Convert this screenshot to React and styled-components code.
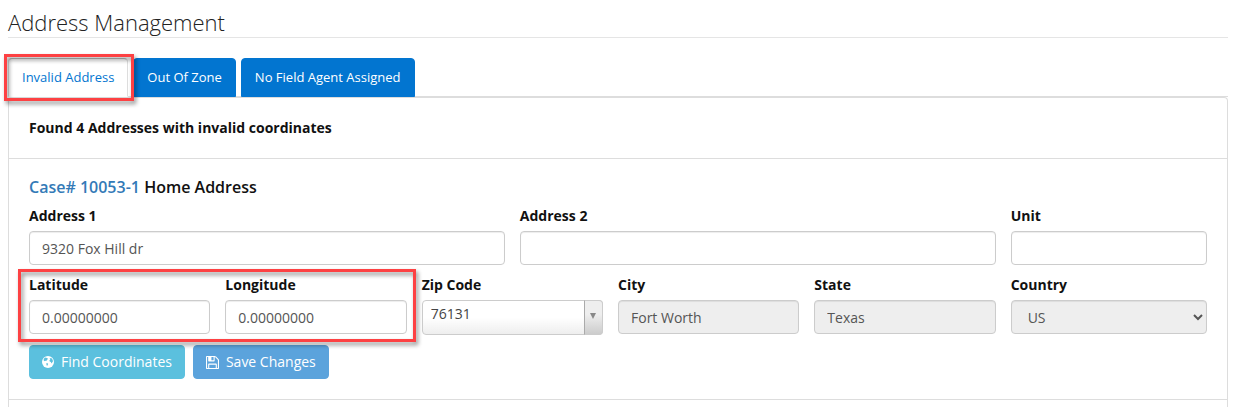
import React, { useState } from "react";
import styled, { createGlobalStyle, css } from "styled-components";

const GlobalStyle = createGlobalStyle`
  * {
    box-sizing: border-box;
  }
  body {
    margin: 0;
    background-color: #fff;
    color: #111;
    font-family: "Open Sans", "Noto Sans", sans-serif;
    font-size: 14px;
    line-height: 20px;
  }
`;

const Page = styled.main`
  display: flex;
  flex-direction: column;
  min-height: 100vh;
  padding: 8px 5px 0 8px;
`;

const Title = styled.h1`
  margin: 0 0 20px;
  padding-bottom: 1px;
  border-bottom: 1px solid #e5e5e5;
  color: #222;
  font-size: 22px;
  font-weight: 300;
  line-height: 28px;
`;

const Tabs = styled.div`
  display: flex;
  gap: 5px;
  border-bottom: 1px solid #ddd;
`;

const TabItem = styled.div`
  position: relative;
  margin-bottom: -1px;
`;

const Tab = styled.button`
  display: block;
  padding: 9px 13px;
  border: 1px solid #0275d0;
  border-radius: 4px 4px 0 0;
  background-color: #0275d0;
  color: #fff;
  font-family: inherit;
  font-size: 13px;
  line-height: 19px;
  cursor: pointer;
  ${(props) =>
    props.$active &&
    css`
      border-color: #bbb #ddd #fff;
      background-color: #fff;
      color: #0275d0;
    `}
`;

const Marker = styled.span`
  position: absolute;
  border: 3px solid #fd4143;
  filter: drop-shadow(2px 3px 2px rgba(0, 0, 0, 0.45));
  pointer-events: none;
  z-index: 1;
`;

const TabMarker = styled(Marker)`
  inset: -4px -6px -4px -4px;
`;

const FieldsMarker = styled(Marker)`
  inset: -6px 6px -8px -11px;
`;

const Panel = styled.div`
  flex: 1;
  border: 1px solid #ddd;
  border-bottom: none;
  border-radius: 4px 4px 0 0;
`;

const Section = styled.section`
  padding: 20px;
  border-bottom: 1px solid #ddd;
`;

const Found = styled.p`
  margin: 0;
  font-weight: 700;
`;

const CaseHeading = styled.h2`
  margin: 0 0 10px;
  font-size: 16px;
  font-weight: 600;
  line-height: 17px;
`;

const CaseLink = styled.a`
  color: #337ab7;
  text-decoration: none;
`;

const Row = styled.div`
  display: grid;
  grid-template-columns: repeat(12, 1fr);
  margin-bottom: 10px;
`;

const Field = styled.div`
  grid-column: span ${(props) => props.$span};
  min-width: 0;
  padding-right: ${(props) => (props.$last ? 0 : 15)}px;
`;

const Coordinates = styled.div`
  position: relative;
  display: grid;
  grid-column: span 4;
  grid-template-columns: 1fr 1fr;
  align-self: start;
`;

const Label = styled.label`
  display: block;
  margin-bottom: 5px;
  font-weight: 700;
`;

const control = css`
  display: block;
  width: 100%;
  height: 34px;
  padding: 6px 12px;
  border: 1px solid #ccc;
  border-radius: 4px;
  background-color: #fff;
  box-shadow: inset 0 1px 1px rgba(0, 0, 0, 0.075);
  color: #555;
  font-family: inherit;
  font-size: 14px;
  font-weight: 400;
  line-height: 20px;
  &:disabled {
    background-color: #eee;
    color: #555;
    opacity: 1;
  }
`;

const Input = styled.input`
  ${control}
`;

const Select = styled.select`
  ${control}
`;

const Picker = styled.div`
  display: grid;
  grid-template-columns: 1fr 19px;
`;

const PickerSelect = styled.select`
  grid-area: 1 / 1 / 2 / 3;
  height: 35px;
  padding: 0 24px 8px 8px;
  appearance: none;
  border: 1px solid #ccc;
  border-radius: 4px;
  background: linear-gradient(to top, #eee 0%, #fff 50%);
  color: #444;
  font-family: inherit;
  font-size: 14px;
  font-weight: 400;
`;

const PickerArrow = styled.span`
  grid-area: 1 / 2 / 2 / 3;
  display: flex;
  justify-content: center;
  padding-top: 12px;
  border: 1px solid #ccc;
  border-left-color: #aaa;
  border-radius: 0 4px 4px 0;
  background: linear-gradient(to top, #ccc 0%, #eee 60%);
  pointer-events: none;
`;

const Actions = styled.div`
  display: flex;
  gap: 8px;
`;

const Button = styled.button`
  display: flex;
  align-items: center;
  gap: 7px;
  padding: 6px 12px;
  border: 1px solid ${(props) => props.$color};
  border-radius: 4px;
  background-color: ${(props) => props.$color};
  color: #fff;
  font-family: inherit;
  font-size: 14px;
  line-height: 20px;
  cursor: pointer;
`;

const GlobeIcon = () => (
  <svg width="12" height="12" viewBox="0 0 12 12" aria-hidden="true">
    <circle cx="6" cy="6" r="6" fill="#fff" />
    <path d="M2 2.6L3.4 1.6L5 2L6 2.8L5 3.9L4.2 5L3 4.7L2.2 5.2L1.6 4Z" fill="#5bc0de" />
    <path d="M4.4 7L5.6 7.2L6.2 8L5.6 9L5.1 10L4.5 9Z" fill="#5bc0de" />
    <path d="M7.6 2.4L9.2 2L10.5 3.6L11 5.3L10.2 6.6L9.5 7.6L8.9 6L7.7 5.4L7.4 4.4L8.3 3.5Z" fill="#5bc0de" />
  </svg>
);

const SaveIcon = () => (
  <svg width="13" height="13" viewBox="0 128 1536 1536" fill="currentColor" aria-hidden="true">
    <path d="M384 1536h768v-384h-768v384zM1280 1536h128v-896q0-14-10-38.500t-20-34.500l-281-281q-10-10-34-20t-39-10v416q0 40-28 68t-68 28h-576q-40 0-68-28t-28-68v-416h-128v1280h128v-416q0-40 28-68t68-28h832q40 0 68 28t28 68v416zM896 608v-320q0-13-9.500-22.500t-22.500-9.500h-192q-13 0-22.500 9.500t-9.500 22.500v320q0 13 9.500 22.500t22.500 9.500h192q13 0 22.500-9.500t9.500-22.500zM1536 640v928q0 40-28 68t-68 28h-1344q-40 0-68-28t-28-68v-1344q0-40 28-68t68-28h928q40 0 88 20t76 48l280 280q28 28 48 76t20 88z" />
  </svg>
);

const TextField = ({ id, label, span, value = "", last, disabled }) => (
  <Field $span={span} $last={last}>
    <Label htmlFor={id}>{label}</Label>
    <Input id={id} type="text" defaultValue={value} disabled={disabled} />
  </Field>
);

const tabs = ["Invalid Address", "Out Of Zone", "No Field Agent Assigned"];

const App = () => {
  const [active, setActive] = useState(0);

  return (
    <Page>
      <GlobalStyle />
      <Title>Address Management</Title>
      <Tabs role="tablist">
        {tabs.map((name, i) => (
          <TabItem key={name} role="presentation">
            <Tab type="button" role="tab" aria-selected={i === active} $active={i === active} onClick={() => setActive(i)}>
              {name}
            </Tab>
            {i === 0 && <TabMarker />}
          </TabItem>
        ))}
      </Tabs>
      <Panel role="tabpanel">
        <Section>
          <Found>Found 4 Addresses with invalid coordinates</Found>
        </Section>
        <Section>
          <CaseHeading>
            <CaseLink href="#case-10053-1">Case# 10053-1</CaseLink> Home Address
          </CaseHeading>
          <Row>
            <TextField id="address1" label="Address 1" span={5} value="9320 Fox Hill dr" />
            <TextField id="address2" label="Address 2" span={5} />
            <TextField id="unit" label="Unit" span={2} last />
          </Row>
          <Row>
            <Coordinates>
              <TextField id="latitude" label="Latitude" span={1} value="0.00000000" />
              <TextField id="longitude" label="Longitude" span={1} value="0.00000000" />
              <FieldsMarker />
            </Coordinates>
            <Field $span={2}>
              <Label htmlFor="zip">Zip Code</Label>
              <Picker>
                <PickerSelect id="zip" defaultValue="76131">
                  <option value="76131">76131</option>
                </PickerSelect>
                <PickerArrow>
                  <svg width="6" height="6" viewBox="0 0 6 6" aria-hidden="true">
                    <path d="M0 0h6L3 6z" fill="#888" />
                  </svg>
                </PickerArrow>
              </Picker>
            </Field>
            <TextField id="city" label="City" span={2} value="Fort Worth" disabled />
            <TextField id="state" label="State" span={2} value="Texas" disabled />
            <Field $span={2} $last>
              <Label htmlFor="country">Country</Label>
              <Select id="country" defaultValue="US" disabled>
                <option value="US">US</option>
              </Select>
            </Field>
          </Row>
          <Actions>
            <Button type="button" $color="#5bc0de">
              <GlobeIcon />
              Find Coordinates
            </Button>
            <Button type="button" $color="#5ba3dc">
              <SaveIcon />
              Save Changes
            </Button>
          </Actions>
        </Section>
      </Panel>
    </Page>
  );
};

export default App;
